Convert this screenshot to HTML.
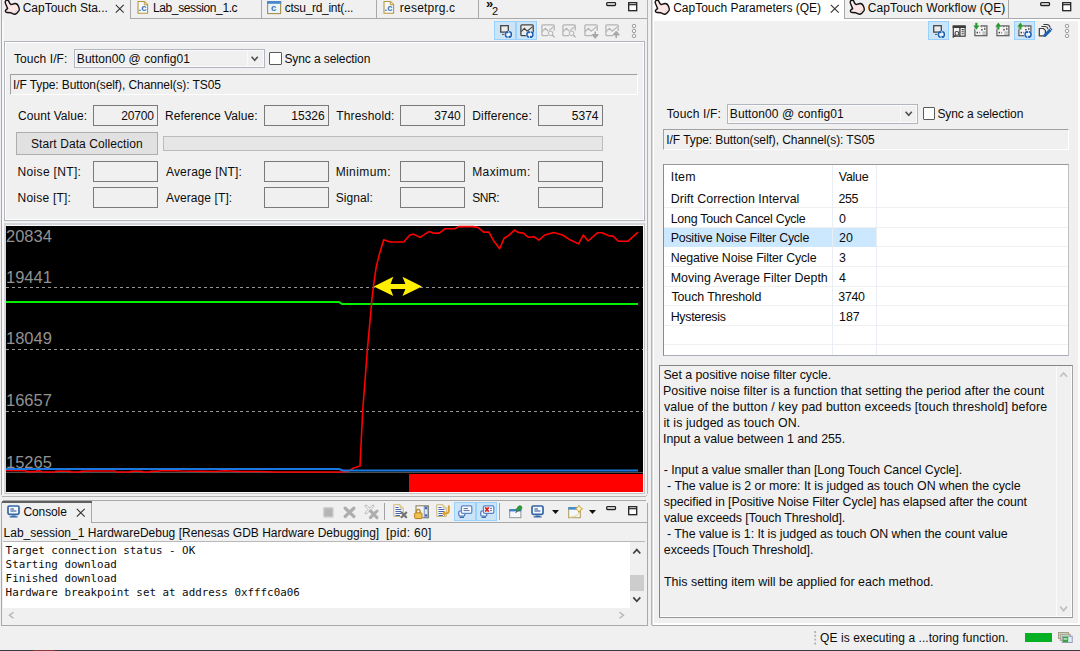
<!DOCTYPE html>
<html><head><meta charset="utf-8"><title>CapTouch</title>
<style>
html,body{margin:0;padding:0;}
body{width:1080px;height:651px;overflow:hidden;background:#f0f0f0;position:relative;font-family:"Liberation Sans",sans-serif;font-size:12px;color:#0c0c0c;}
.a{position:absolute;}
.t{position:absolute;white-space:pre;line-height:14px;height:14px;}
.box{position:absolute;box-sizing:border-box;border:1px solid #7a7a7a;background:#f0f0f0;}
.val{position:absolute;box-sizing:border-box;border:1px solid #7a7a7a;background:#f0f0f0;text-align:right;padding-right:4px;line-height:19px;}
.ln{position:absolute;background:#a0a0a0;}
svg{position:absolute;overflow:visible;}
.tb{position:absolute;left:671px;white-space:pre;font-size:12.4px;line-height:14px;}
.tv{position:absolute;left:839px;white-space:pre;font-size:12.4px;line-height:14px;}
.dl{font-size:12.4px;line-height:16px;height:16px;}
#tab1{left:22.73px!important;letter-spacing:-0.020px}
#tab2{left:153.02px!important;letter-spacing:-0.390px}
#tab3{left:284.85px!important;letter-spacing:-0.301px}
#tab4{left:399.82px!important;letter-spacing:0.215px}
#t1{left:14.04px!important;letter-spacing:0.060px}
#t2{left:76.85px!important;letter-spacing:0.039px}
#t3{left:284.45px!important;letter-spacing:-0.097px}
#t4{left:12.95px!important;letter-spacing:-0.095px}
#t5{left:18.10px!important;letter-spacing:0.043px}
#v1{left:121.23px!important;letter-spacing:-0.177px}
#t6{left:165.00px!important;letter-spacing:0.043px}
#v2{left:291.36px!important;letter-spacing:-0.010px}
#t7{left:336.13px!important;letter-spacing:0.176px}
#v3{left:434.13px!important;letter-spacing:-0.032px}
#t8{left:472.21px!important;letter-spacing:0.179px}
#v4{left:571.81px!important;letter-spacing:-0.001px}
#t9{left:31.03px!important;letter-spacing:0.079px}
#t10{left:17.53px!important;letter-spacing:0.343px}
#t11{left:166.00px!important;letter-spacing:0.167px}
#t12{left:335.64px!important;letter-spacing:0.412px}
#t13{left:472.21px!important;letter-spacing:0.389px}
#t14{left:17.53px!important;letter-spacing:0.225px}
#t15{left:166.00px!important;letter-spacing:0.094px}
#t16{left:335.67px!important;letter-spacing:0.073px}
#t17{left:472.18px!important;letter-spacing:-0.397px}
#rtab1{left:673.22px!important;letter-spacing:-0.013px}
#rtab2{left:867.73px!important;letter-spacing:0.118px}
#t18{left:666.66px!important;letter-spacing:0.170px}
#t19{left:729.79px!important;letter-spacing:0.097px}
#t20{left:937.45px!important;letter-spacing:-0.097px}
#t21{left:666.35px!important;letter-spacing:-0.082px}
#t22{left:670.76px!important;letter-spacing:0.213px}
#t24{left:670.72px!important;letter-spacing:0.053px}
#t26{left:670.72px!important;letter-spacing:-0.240px}
#t28{left:670.64px!important;letter-spacing:-0.201px}
#t30{left:670.72px!important;letter-spacing:-0.136px}
#t32{left:670.72px!important;letter-spacing:0.036px}
#t34{left:671.50px!important;letter-spacing:-0.107px}
#t36{left:670.72px!important;letter-spacing:-0.302px}
#t23{left:838.86px!important;letter-spacing:-0.255px}
#t25{left:838.52px!important;letter-spacing:-0.430px}
#t35{left:838.34px!important;letter-spacing:-0.313px}
#d1{left:663.39px!important;letter-spacing:-0.050px}
#d2{left:663.00px!important;letter-spacing:0.043px}
#d3{left:664.00px!important;letter-spacing:0.092px}
#d4{left:663.49px!important;letter-spacing:0.071px}
#d5{left:663.00px!important;letter-spacing:-0.036px}
#d7{left:663.79px!important;letter-spacing:-0.095px}
#d8{left:667.12px!important;letter-spacing:-0.026px}
#d9{left:663.79px!important;letter-spacing:-0.085px}
#d10{left:664.00px!important;letter-spacing:-0.099px}
#d11{left:667.12px!important;letter-spacing:-0.059px}
#d12{left:663.85px!important;letter-spacing:-0.072px}
#d14{left:664.00px!important;letter-spacing:0.033px}
#ctab{left:23.47px!important;letter-spacing:-0.111px}
#chdr{left:3.53px!important;letter-spacing:0.013px}
#chdr2{left:386.10px!important;letter-spacing:0.307px}
#stat{left:820.12px!important;letter-spacing:0.058px}
</style></head><body>

<!-- ================= LEFT TOP PANEL ================= -->
<div class="ln" style="left:1px;top:0;width:1px;height:495px;background:#a9a9a9"></div>
<div class="ln" style="left:647px;top:0;width:1px;height:494px;background:#b4b4b4"></div>
<div class="ln" style="left:2px;top:18px;width:645px;height:1px;background:#a9a9a9"></div>
<div class="ln" style="left:2px;top:496px;width:644px;height:1px;background:#b4b4b4"></div><div class="ln" style="left:646px;top:495px;width:1px;height:1px;background:#b4b4b4"></div>
<div class="a" id="lwhite" style="left:2px;top:19px;width:2px;height:476px;background:#f8f8f8"></div>
<!-- tab separators -->
<div class="ln" style="left:130px;top:0;width:1px;height:18px;background:#a9a9a9"></div>
<div class="ln" style="left:261px;top:0;width:1px;height:18px;background:#a9a9a9"></div>
<div class="ln" style="left:376px;top:0;width:1px;height:18px;background:#a9a9a9"></div>
<div class="ln" style="left:478px;top:0;width:1px;height:18px;background:#a9a9a9"></div>
<div class="a" style="left:2px;top:0;width:128px;height:19px;background:#f0f0f0"></div>

<span class="t" id="tab1" style="left:23px;top:1px;">CapTouch Sta...</span>
<span class="t" id="tab2" style="left:153px;top:1px;">Lab_session_1.c</span>
<span class="t" id="tab3" style="left:285px;top:1px;">ctsu_rd_int(...</span>
<span class="t" id="tab4" style="left:400px;top:1px;">resetprg.c</span>
<span class="t" id="tabmore" style="left:486px;top:-3px;font-size:13px;font-weight:bold">»</span>
<span class="t" id="tabmore2" style="left:492px;top:4px;font-size:11px;">2</span>

<!-- inner composite -->
<div class="a" id="comp" style="left:4px;top:41px;width:641px;height:180px;box-sizing:border-box;border:1px solid #b0b4bc;box-shadow:inset 1px 1px 0 #fff,inset -1px -1px 0 #fff;"></div>
<span class="t" id="t1" style="left:14px;top:52px;">Touch I/F:</span>
<div class="box" style="left:74px;top:49px;width:191px;height:19px;border-color:#b2b6be;background:#f0f0f0;box-shadow:inset 0 0 0 1px #fafafa"></div><div class="ln" style="left:247px;top:50px;width:1px;height:17px;background:#fafafa"></div>
<span class="t" id="t2" style="left:78px;top:52px;">Button00 @ config01</span>
<div class="box" style="left:269.3px;top:52.1px;width:12.6px;height:12.6px;background:#fff;border:1.2px solid #5a5a5a;border-radius:1px"></div>
<span class="t" id="t3" style="left:285px;top:52px;">Sync a selection</span>
<div class="box" style="left:10px;top:74px;width:628px;height:21px;border-color:#a0a0a0;border-bottom-color:#fff;border-right-color:#fff"></div>
<span class="t" id="t4" style="left:13px;top:78px;">I/F Type: Button(self), Channel(s): TS05</span>

<span class="t" id="t5" style="left:18px;top:109px;">Count Value:</span>
<div class="val" style="left:93px;top:105px;width:65px;height:21px;"></div>
<span class="t" id="v1" style="left:121.4px;top:109px;">20700</span>
<span class="t" id="t6" style="left:166px;top:109px;">Reference Value:</span>
<div class="val" style="left:264px;top:105px;width:65px;height:21px;"></div>
<span class="t" id="v2" style="left:292px;top:109px;">15326</span>
<span class="t" id="t7" style="left:336px;top:109px;">Threshold:</span>
<div class="val" style="left:400px;top:105px;width:65px;height:21px;"></div>
<span class="t" id="v3" style="left:434.7px;top:109px;">3740</span>
<span class="t" id="t8" style="left:473px;top:109px;">Difference:</span>
<div class="val" style="left:538px;top:105px;width:65px;height:21px;"></div>
<span class="t" id="v4" style="left:572.3px;top:109px;">5374</span>

<div class="box" style="left:16px;top:132px;width:142px;height:23px;background:#e1e1e1;border-color:#adadad"></div>
<span class="t" id="t9" style="left:31px;top:137px;">Start Data Collection</span>
<div class="box" style="left:163px;top:136px;width:440px;height:15px;background:#e6e6e6;border-color:#bcbcbc"></div>

<span class="t" id="t10" style="left:18px;top:165px;">Noise [NT]:</span>
<div class="val" style="left:93px;top:161px;width:65px;height:21px;"></div>
<span class="t" id="t11" style="left:166px;top:165px;">Average [NT]:</span>
<div class="val" style="left:264px;top:161px;width:65px;height:21px;"></div>
<span class="t" id="t12" style="left:336px;top:165px;">Minimum:</span>
<div class="val" style="left:400px;top:161px;width:65px;height:21px;"></div>
<span class="t" id="t13" style="left:473px;top:165px;">Maximum:</span>
<div class="val" style="left:538px;top:161px;width:65px;height:21px;"></div>

<span class="t" id="t14" style="left:18px;top:191px;">Noise [T]:</span>
<div class="val" style="left:93px;top:187px;width:65px;height:21px;"></div>
<span class="t" id="t15" style="left:166px;top:191px;">Average [T]:</span>
<div class="val" style="left:264px;top:187px;width:65px;height:21px;"></div>
<span class="t" id="t16" style="left:336px;top:191px;">Signal:</span>
<div class="val" style="left:400px;top:187px;width:65px;height:21px;"></div>
<span class="t" id="t17" style="left:473px;top:191px;">SNR:</span>
<div class="val" style="left:538px;top:187px;width:65px;height:21px;"></div>

<!-- CHART -->
<div class="a" id="chartwrap" style="left:4px;top:223px;width:641px;height:271px;box-sizing:border-box;border:2px solid #d2d5d9;border-right:1px solid #c4c4c4;border-bottom:1px solid #c4c4c4;background:#fafafa"></div>
<div class="a" id="chart" style="left:6px;top:226px;width:637px;height:266px;background:#000"></div>
<svg id="chartsvg" style="left:0;top:0" width="1080" height="651" viewBox="0 0 1080 651">
<g font-family="'Liberation Sans',sans-serif" font-size="16.5" fill="#929292">
<text x="6" y="242">20834</text>
<text x="6" y="283">19441</text>
<text x="6" y="344">18049</text>
<text x="6" y="406">16657</text>
<text x="6" y="468">15265</text>
</g>
<g stroke="#969696" stroke-width="1" stroke-dasharray="3 3" fill="none">
<path d="M6 287.5H643"/><path d="M6 349.5H643"/><path d="M6 411.5H643"/>
</g>
<path d="M6 472.5H643" stroke="#505050" stroke-width="1" fill="none"/>
<polyline fill="none" stroke="#00f000" stroke-width="2" points="6,302 339,302 342,304 638,304"/>
<polyline fill="none" stroke="#ff0000" stroke-width="1.6" stroke-linejoin="round" points="6,470.5 25,470.8 27,471.6 36,471.6 37,470.9 40,470.9 42,472 55,472 56,471.3 70,471.3 71,472 80,472 82,471.2 91,471 95,471 115,471 116,472 130,472 131,471.3 142,471.3 143,472 150,472 151,471.3 158,471.3 160,470.8 176,470.8 180,471 200,471.2 215,471.5 225,470.8 240,471.5 260,471.5 275,472 300,472 330,472 343,472 349.6,470.6 353.5,468 360,466 362.7,410.5 367.4,349.2 370.4,316.8 371.9,299 374.1,281.3 376.3,266.4 379.3,254.6 383.7,239.8 390.4,242 403.7,242 409.6,235.3 413.3,234.1 420,237.3 428.9,231.6 433.3,233.1 439.3,233.1 445.2,228.7 454.8,228.7 458.5,226.6 473.3,226.6 477.8,227.4 483.7,232.1 488.9,232.1 494,241.3 499.6,248.7 504.1,238.3 508.5,235.6 514.4,230.1 518.1,232.4 523.3,233.1 528.5,237.3 534.4,236.8 538.9,240.1 544.8,235 553.7,232.4 562.6,235 570,239.8 578.6,243.9 583.3,235 588.1,241 597.4,232.8 601.9,232.8 608.5,235.6 613,236.1 618.6,241.3 627.8,241.3 638.1,232.1"/>
<polyline fill="none" stroke="#1a78e0" stroke-width="2" points="6,469 339,469 343,470.5 638,470.5"/>
<rect x="409" y="474" width="234" height="18" fill="#ff0000"/>
<path d="M373.8 286.4 L393.3 276.8 L390.6 284 L405.4 284 L402.5 276.8 L422 286.4 L402.5 296 L405.4 289 L390.6 289 L393.3 296 Z" fill="#ffee00"/>
</svg>

<!-- ================= CONSOLE ================= -->

<div class="ln" style="left:1px;top:502px;width:1px;height:123px;background:#a9a9a9"></div>
<div class="ln" style="left:647px;top:503px;width:1px;height:122px;background:#a9a9a9"></div>
<div class="ln" style="left:3px;top:500px;width:643px;height:1px;background:#a9a9a9"></div>
<div class="ln" style="left:2px;top:501px;width:90px;height:2px;background:#5f5f5f"></div>
<div class="ln" style="left:91px;top:503px;width:1px;height:20px;background:#a9a9a9"></div>
<div class="ln" style="left:92px;top:522px;width:555px;height:1px;background:#a9a9a9"></div>
<span class="t" id="ctab" style="left:24px;top:505px;">Console</span>
<span class="t" id="chdr" style="left:4px;top:526px;">Lab_session_1 HardwareDebug [Renesas GDB Hardware Debugging]</span>
<span class="t" id="chdr2" style="left:387px;top:526px;">[pid: 60]</span>
<div class="ln" style="left:3px;top:541px;width:642px;height:1px;background:#b8b8b8"></div>
<div class="a" style="left:3px;top:542px;width:627px;height:66px;background:#fff"></div>
<div class="a" id="ctext" style="left:5.6px;top:544px;white-space:pre;font-family:'DejaVu Sans Mono','Liberation Mono',monospace;font-size:10.87px;line-height:14.1px;">Target connection status - OK
Starting download
Finished download
Hardware breakpoint set at address 0xfffc0a06</div>
<div class="ln" style="left:1px;top:625px;width:647px;height:1px;background:#a9a9a9"></div>



<div class="a" style="left:630px;top:575px;width:14px;height:16px;background:#cdcdcd"></div>
<svg style="left:630px;top:542px" width="15" height="80" viewBox="0 0 15 80"><path d="M3.3 11.5L6.8 7.6L10.3 11.5" fill="none" stroke="#404040" stroke-width="1.7"/><path d="M3.3 55.4L6.8 59.3L10.3 55.4" fill="none" stroke="#404040" stroke-width="1.7"/></svg>
<svg style="left:0;top:608px" width="648" height="14" viewBox="0 0 648 14"><path d="M13.5 4.3L9.5 7.3L13.5 10.3" fill="none" stroke="#b4b4b4" stroke-width="1.4"/><path d="M619.5 4.3L623.5 7.3L619.5 10.3" fill="none" stroke="#b4b4b4" stroke-width="1.4"/></svg>
<!-- ================= RIGHT PANEL ================= -->

<div class="ln" style="left:651px;top:0;width:1px;height:625px;background:#b4b4b4"></div><div class="ln" style="left:652px;top:0;width:1px;height:625px;background:#dcdcdc"></div>
<div class="ln" style="left:652px;top:625px;width:428px;height:1px;background:#a9a9a9"></div>
<div class="a" style="left:653px;top:0;width:192px;height:21px;background:#fff"></div>
<div class="ln" style="left:844px;top:0;width:1px;height:19px;background:#a9a9a9"></div>
<div class="ln" style="left:845px;top:18px;width:235px;height:1px;background:#a9a9a9"></div>
<div class="ln" style="left:1008px;top:0;width:1px;height:18px;background:#a9a9a9"></div>
<div class="a" style="left:845px;top:19px;width:235px;height:2px;background:#fff"></div>
<span class="t" id="rtab1" style="left:674px;top:1px;">CapTouch Parameters (QE)</span>
<span class="t" id="rtab2" style="left:868px;top:1px;">CapTouch Workflow (QE)</span>

<span class="t" id="t18" style="left:667px;top:107px;">Touch I/F:</span>
<div class="box" style="left:727px;top:104px;width:191px;height:19.5px;border-color:#b2b6be;box-shadow:inset 0 0 0 1px #fafafa"></div><div class="ln" style="left:900px;top:105px;width:1px;height:17px;background:#fafafa"></div>
<span class="t" id="t19" style="left:731px;top:107px;">Button00 @ config01</span>
<div class="box" style="left:922.8px;top:107.3px;width:12.4px;height:12.5px;background:#fff;border:1.2px solid #5a5a5a;border-radius:1px"></div>
<span class="t" id="t20" style="left:938px;top:107px;">Sync a selection</span>
<div class="box" style="left:663px;top:129px;width:406px;height:21px;border-color:#a0a0a0;border-bottom-color:#fff;border-right-color:#fff"></div>
<span class="t" id="t21" style="left:667px;top:133px;">I/F Type: Button(self), Channel(s): TS05</span>

<!-- table -->
<div class="box" id="tbl" style="left:663px;top:164px;width:406px;height:192px;background:#fff;border-color:#9a9a9a #c0c0c0 #a8acb8 #8c8c8c"></div>
<div class="ln" style="left:664px;top:207px;width:404px;height:1px;background:#f0f0f0"></div>
<div class="ln" style="left:664px;top:227px;width:404px;height:1px;background:#f0f0f0"></div>
<div class="ln" style="left:664px;top:246px;width:404px;height:1px;background:#f0f0f0"></div>
<div class="ln" style="left:664px;top:266px;width:404px;height:1px;background:#f0f0f0"></div>
<div class="ln" style="left:664px;top:286px;width:404px;height:1px;background:#f0f0f0"></div>
<div class="ln" style="left:664px;top:305px;width:404px;height:1px;background:#f0f0f0"></div>
<div class="ln" style="left:664px;top:325px;width:404px;height:1px;background:#f0f0f0"></div>
<div class="ln" style="left:664px;top:344px;width:404px;height:1px;background:#f0f0f0"></div>
<div class="a" style="left:664px;top:228px;width:212px;height:19px;background:#cce8ff"></div>
<div class="ln" style="left:832px;top:165px;width:1px;height:190px;background:#e8eef4"></div>
<div class="ln" style="left:876px;top:165px;width:1px;height:190px;background:#e8eef4"></div>
<div class="tb" id="t22" style="top:170px">Item</div><div class="tv" id="t23" style="top:170px">Value</div>
<div class="tb" id="t24" style="top:192px">Drift Correction Interval</div><div class="tv" id="t25" style="top:192px">255</div>
<div class="tb" id="t26" style="top:212px">Long Touch Cancel Cycle</div><div class="tv" id="t27" style="top:212px">0</div>
<div class="tb" id="t28" style="top:231px">Positive Noise Filter Cycle</div><div class="tv" id="t29" style="top:231px">20</div>
<div class="tb" id="t30" style="top:251px">Negative Noise Filter Cycle</div><div class="tv" id="t31" style="top:251px">3</div>
<div class="tb" id="t32" style="top:271px">Moving Average Filter Depth</div><div class="tv" id="t33" style="top:271px">4</div>
<div class="tb" id="t34" style="top:290px">Touch Threshold</div><div class="tv" id="t35" style="top:290px">3740</div>
<div class="tb" id="t36" style="top:310px">Hysteresis</div><div class="tv" id="t37" style="top:310px">187</div>

<!-- description -->
<div class="box" id="desc" style="left:659px;top:364.5px;width:414.3px;height:253.3px;border-color:#868686 #a4a4a4 #979797 #868686;box-shadow:inset -1px -1px 0 #fcfcfc"></div>
<div class="ln" style="left:1056px;top:366px;width:1px;height:250px;background:#fafafa"></div>
<span class="t dl" id="d1" style="left:664px;top:367.00px;">Set a positive noise filter cycle.</span>
<span class="t dl" id="d2" style="left:664px;top:382.89px;">Positive noise filter is a function that setting the period after the count</span>
<span class="t dl" id="d3" style="left:664px;top:398.78px;">value of the button / key pad button exceeds [touch threshold] before</span>
<span class="t dl" id="d4" style="left:664px;top:414.67px;">it is judged as touch ON.</span>
<span class="t dl" id="d5" style="left:664px;top:430.56px;">Input a value between 1 and 255.</span>
<span class="t dl" id="d7" style="left:664px;top:462.34px;">- Input a value smaller than [Long Touch Cancel Cycle].</span>
<span class="t dl" id="d8" style="left:667.7px;top:478.23px;">- The value is 2 or more: It is judged as touch ON when the cycle</span>
<span class="t dl" id="d9" style="left:664px;top:494.12px;">specified in [Positive Noise Filter Cycle] has elapsed after the count</span>
<span class="t dl" id="d10" style="left:664px;top:510.01px;">value exceeds [Touch Threshold].</span>
<span class="t dl" id="d11" style="left:667.7px;top:525.90px;">- The value is 1: It is judged as touch ON when the count value</span>
<span class="t dl" id="d12" style="left:664px;top:541.79px;">exceeds [Touch Threshold].</span>
<span class="t dl" id="d14" style="left:664px;top:573.57px;">This setting item will be applied for each method.</span>



<!-- desc scrollbar -->
<svg style="left:1056px;top:366px" width="17" height="251" viewBox="0 0 17 251"><path d="M4.2 10.8L7.6 7L11 10.8" fill="none" stroke="#c0c0c0" stroke-width="1.7"/><path d="M4.2 240.6L7.6 244.6L11 240.6" fill="none" stroke="#c0c0c0" stroke-width="1.7"/></svg>
<div class="ln" style="left:653px;top:20px;width:1px;height:604px;background:#fff"></div>
<div class="ln" style="left:653px;top:623px;width:427px;height:2px;background:#fff"></div>
<div class="ln" style="left:1078px;top:19px;width:2px;height:605px;background:#fff"></div>
<svg style="left:0px;top:0px" width="22" height="16" viewBox="0 0 22 16"><path d="M6.6 0.4 C5.2 0.6 5 2 5.5 3.5 L7.6 8.6 L5.9 9.9 C5 10.8 5.4 12.4 7 12.5 L11 12.8 L13.8 14.2 C15 14.6 16 14 17 13 L19 10.6 C19.6 9.5 19.2 8 18.6 6.5 C18 5 16.5 3.4 15 3.5 L11 4.6 L9.9 3.6 L8.6 0.9 C8.1 0.1 7.2 0.1 6.6 0.4 Z" fill="#fde6e6" stroke="#111" stroke-width="1.4" stroke-linejoin="round"/><path d="M14.5 12.6L17.2 9.6" stroke="#d8c0c0" stroke-width="0.8" fill="none"/></svg>
<svg style="left:650px;top:0px" width="22" height="16" viewBox="0 0 22 16"><path d="M6.6 0.4 C5.2 0.6 5 2 5.5 3.5 L7.6 8.6 L5.9 9.9 C5 10.8 5.4 12.4 7 12.5 L11 12.8 L13.8 14.2 C15 14.6 16 14 17 13 L19 10.6 C19.6 9.5 19.2 8 18.6 6.5 C18 5 16.5 3.4 15 3.5 L11 4.6 L9.9 3.6 L8.6 0.9 C8.1 0.1 7.2 0.1 6.6 0.4 Z" fill="#fde6e6" stroke="#111" stroke-width="1.4" stroke-linejoin="round"/><path d="M14.5 12.6L17.2 9.6" stroke="#d8c0c0" stroke-width="0.8" fill="none"/></svg>
<svg style="left:845px;top:0px" width="22" height="16" viewBox="0 0 22 16"><path d="M6.6 0.4 C5.2 0.6 5 2 5.5 3.5 L7.6 8.6 L5.9 9.9 C5 10.8 5.4 12.4 7 12.5 L11 12.8 L13.8 14.2 C15 14.6 16 14 17 13 L19 10.6 C19.6 9.5 19.2 8 18.6 6.5 C18 5 16.5 3.4 15 3.5 L11 4.6 L9.9 3.6 L8.6 0.9 C8.1 0.1 7.2 0.1 6.6 0.4 Z" fill="#fde6e6" stroke="#111" stroke-width="1.4" stroke-linejoin="round"/><path d="M14.5 12.6L17.2 9.6" stroke="#d8c0c0" stroke-width="0.8" fill="none"/></svg>
<svg style="left:137px;top:0px" width="12" height="15" viewBox="0 0 12 15"><path d="M1 1.5H7.5L10.6 4.6V13.3H1Z" fill="#f4f8ff" stroke="#b8963c" stroke-width="1.1"/><path d="M7.3 1.5V4.8H10.6" fill="#f3dfa0" stroke="#b8963c" stroke-width="0.9"/><text x="1.6" y="11" font-family="'Liberation Sans',sans-serif" font-size="9.5" font-weight="bold" fill="#3a74b4">.c</text></svg>
<svg style="left:383.4px;top:0px" width="12" height="15" viewBox="0 0 12 15"><path d="M1 1.5H7.5L10.6 4.6V13.3H1Z" fill="#f4f8ff" stroke="#b8963c" stroke-width="1.1"/><path d="M7.3 1.5V4.8H10.6" fill="#f3dfa0" stroke="#b8963c" stroke-width="0.9"/><text x="1.6" y="11" font-family="'Liberation Sans',sans-serif" font-size="9.5" font-weight="bold" fill="#3a74b4">.c</text></svg>
<svg style="left:266.6px;top:0px" width="15" height="15" viewBox="0 0 15 15"><rect x="0.6" y="1.6" width="13" height="12" fill="#e8f4fc" stroke="#a8904a" stroke-width="1.1"/><rect x="0" y="1" width="14.2" height="2.8" fill="#4a88c8"/><text x="4" y="11.4" font-family="'Liberation Sans',sans-serif" font-size="9.5" font-weight="bold" fill="#3a74b4">c</text></svg>
<svg style="left:114.5px;top:4px" width="10" height="10" viewBox="0 0 10 10"><path d="M0.8 0.8L8.7 8.7M8.7 0.8L0.8 8.7" stroke="#333" stroke-width="1.1" fill="none"/></svg>
<svg style="left:829.5px;top:4px" width="10" height="10" viewBox="0 0 10 10"><path d="M0.8 0.8L8.7 8.7M8.7 0.8L0.8 8.7" stroke="#333" stroke-width="1.1" fill="none"/></svg>
<svg style="left:75.5px;top:507.5px" width="10" height="10" viewBox="0 0 10 10"><path d="M0.8 0.8L8.7 8.7M8.7 0.8L0.8 8.7" stroke="#333" stroke-width="1.1" fill="none"/></svg>
<svg style="left:606px;top:2px" width="11" height="5" viewBox="0 0 11 5"><rect x="0.7" y="0.7" width="8.8" height="2.8" rx="0.8" fill="#fff" stroke="#222" stroke-width="1.3"/></svg>
<svg style="left:628px;top:2px" width="10" height="10" viewBox="0 0 10 10"><rect x="0.7" y="0.7" width="8" height="8" fill="#fff" stroke="#222" stroke-width="1.3"/><path d="M0.7 2.7H8.7" stroke="#222" stroke-width="1.2"/></svg>
<svg style="left:1040px;top:2px" width="11" height="5" viewBox="0 0 11 5"><rect x="0.7" y="0.7" width="8.8" height="2.8" rx="0.8" fill="#fff" stroke="#222" stroke-width="1.3"/></svg>
<svg style="left:1061.5px;top:2px" width="10" height="10" viewBox="0 0 10 10"><rect x="0.7" y="0.7" width="8" height="8" fill="#fff" stroke="#222" stroke-width="1.3"/><path d="M0.7 2.7H8.7" stroke="#222" stroke-width="1.2"/></svg>
<svg style="left:606px;top:506px" width="11" height="5" viewBox="0 0 11 5"><rect x="0.7" y="0.7" width="8.8" height="2.8" rx="0.8" fill="#fff" stroke="#222" stroke-width="1.3"/></svg>
<svg style="left:628px;top:506px" width="10" height="10" viewBox="0 0 10 10"><rect x="0.7" y="0.7" width="8" height="8" fill="#fff" stroke="#222" stroke-width="1.3"/><path d="M0.7 2.7H8.7" stroke="#222" stroke-width="1.2"/></svg>
<div class="a" style="left:494px;top:20.5px;width:22px;height:19.5px;box-sizing:border-box;background:#cce4f7;border:1px solid #99d1ff"></div>
<div class="a" style="left:515.5px;top:20.5px;width:21.5px;height:19.5px;box-sizing:border-box;background:#cce4f7;border:1px solid #99d1ff"></div>
<div class="a" style="left:927.5px;top:20.5px;width:21.5px;height:19px;box-sizing:border-box;background:#cce4f7;border:1px solid #99d1ff"></div>
<div class="a" style="left:1013.5px;top:20.5px;width:21.5px;height:19px;box-sizing:border-box;background:#cce4f7;border:1px solid #99d1ff"></div>
<div class="a" style="left:454px;top:501.5px;width:22px;height:19.5px;box-sizing:border-box;background:#cce4f7;border:1px solid #99d1ff"></div>
<div class="a" style="left:475.5px;top:501.5px;width:21.5px;height:19.5px;box-sizing:border-box;background:#cce4f7;border:1px solid #99d1ff"></div>
<svg style="left:497px;top:22px" width="17" height="18" viewBox="0 0 17 18"><rect x="3.7" y="3.7" width="7.6" height="6.4" fill="#ececec" stroke="#454545" stroke-width="1.3"/><path d="M5 12.4H8" stroke="#555" stroke-width="1"/><ellipse cx="11.4" cy="12.55" rx="4.2" ry="3.6" fill="#f2f6fb" opacity="0.9"/><path d="M10.700000000000001 9.850000000000001A2.3 2.7 0 0 0 10.700000000000001 15.25" fill="none" stroke="#1a5fb4" stroke-width="1.5"/><path d="M12.1 15.25A2.3 2.7 0 0 0 12.1 9.850000000000001" fill="none" stroke="#1a5fb4" stroke-width="1.5"/><rect x="9.5" y="9.25" width="1.9" height="1.9" fill="#1a5fb4"/><rect x="11.4" y="13.950000000000001" width="1.9" height="1.9" fill="#1a5fb4"/></svg>
<svg style="left:930.3px;top:22px" width="17" height="18" viewBox="0 0 17 18"><rect x="3.7" y="3.7" width="7.6" height="6.4" fill="#ececec" stroke="#454545" stroke-width="1.3"/><path d="M5 12.4H8" stroke="#555" stroke-width="1"/><ellipse cx="11.4" cy="12.55" rx="4.2" ry="3.6" fill="#f2f6fb" opacity="0.9"/><path d="M10.700000000000001 9.850000000000001A2.3 2.7 0 0 0 10.700000000000001 15.25" fill="none" stroke="#1a5fb4" stroke-width="1.5"/><path d="M12.1 15.25A2.3 2.7 0 0 0 12.1 9.850000000000001" fill="none" stroke="#1a5fb4" stroke-width="1.5"/><rect x="9.5" y="9.25" width="1.9" height="1.9" fill="#1a5fb4"/><rect x="11.4" y="13.950000000000001" width="1.9" height="1.9" fill="#1a5fb4"/></svg>
<svg style="left:520px;top:24px" width="18" height="16" viewBox="0 0 18 16"><rect x="0.9" y="0.8" width="12.3" height="10.9" rx="1" fill="#ececec" stroke="#454545" stroke-width="1.3"/><path d="M1.2 7.6L4.4 4.4L7.2 7.2L12.6 2.6" fill="none" stroke="#454545" stroke-width="1.1"/><ellipse cx="9.9" cy="10.6" rx="4.2" ry="3.6" fill="#f2f6fb" opacity="0.9"/><path d="M9.200000000000001 7.8999999999999995A2.3 2.7 0 0 0 9.200000000000001 13.3" fill="none" stroke="#1a5fb4" stroke-width="1.5"/><path d="M10.6 13.3A2.3 2.7 0 0 0 10.6 7.8999999999999995" fill="none" stroke="#1a5fb4" stroke-width="1.5"/><rect x="8.0" y="7.3" width="1.9" height="1.9" fill="#1a5fb4"/><rect x="9.9" y="12.0" width="1.9" height="1.9" fill="#1a5fb4"/></svg>
<svg style="left:541px;top:24.4px" width="18" height="16" viewBox="0 0 18 16"><rect x="0.9" y="0.8" width="12.3" height="10.9" rx="1" fill="none" stroke="#b4b4b4" stroke-width="1.3"/><path d="M1.2 7.6L4.4 4.4L7.2 7.2L12.6 2.6" fill="none" stroke="#b4b4b4" stroke-width="1.1"/><rect x="7" y="6.5" width="7" height="7" fill="#f0f0f0" stroke="none"/><circle cx="9.6" cy="9.3" r="2.3" fill="#f0f0f0" stroke="#b0b0b0" stroke-width="1"/><path d="M11.3 11L13.6 13.4" stroke="#b0b0b0" stroke-width="1.3"/></svg>
<svg style="left:562.3px;top:24.4px" width="18" height="16" viewBox="0 0 18 16"><rect x="0.9" y="0.8" width="12.3" height="10.9" rx="1" fill="none" stroke="#b4b4b4" stroke-width="1.3"/><path d="M1.2 7.6L4.4 4.4L7.2 7.2L12.6 2.6" fill="none" stroke="#b4b4b4" stroke-width="1.1"/><rect x="7" y="6.5" width="7" height="7" fill="#f0f0f0" stroke="none"/><circle cx="9.6" cy="9.3" r="2.3" fill="#f0f0f0" stroke="#b0b0b0" stroke-width="1"/><path d="M11.3 11L13.6 13.4" stroke="#b0b0b0" stroke-width="1.3"/></svg>
<svg style="left:584px;top:24.4px" width="18" height="16" viewBox="0 0 18 16"><rect x="0.9" y="0.8" width="12.3" height="10.9" rx="1" fill="none" stroke="#b4b4b4" stroke-width="1.3"/><path d="M1.2 7.6L4.4 4.4L7.2 7.2L12.6 2.6" fill="none" stroke="#b4b4b4" stroke-width="1.1"/><rect x="8" y="7" width="7" height="8" fill="#f0f0f0"/><path d="M11.2 7.5V12M8.6 10.8L11.2 13.8L13.8 10.8Z" stroke="#a8a8a8" stroke-width="1.6" fill="#a8a8a8" stroke-linejoin="round"/></svg>
<svg style="left:605.2px;top:24.4px" width="18" height="16" viewBox="0 0 18 16"><rect x="0.9" y="0.8" width="12.3" height="10.9" rx="1" fill="none" stroke="#b4b4b4" stroke-width="1.3"/><path d="M1.2 7.6L4.4 4.4L7.2 7.2L12.6 2.6" fill="none" stroke="#b4b4b4" stroke-width="1.1"/><rect x="8" y="7" width="7" height="8" fill="#f0f0f0"/><path d="M11.2 14V9.5M8.6 10.8L11.2 7.8L13.8 10.8Z" stroke="#a8a8a8" stroke-width="1.6" fill="#a8a8a8" stroke-linejoin="round"/></svg>
<svg style="left:629.8px;top:22.3px" width="8" height="20" viewBox="0 0 8 20"><circle cx="4" cy="4.0" r="1.75" fill="#f8f8f8" stroke="#969696" stroke-width="0.95"/><circle cx="4" cy="8.95" r="1.75" fill="#f8f8f8" stroke="#969696" stroke-width="0.95"/><circle cx="4" cy="13.9" r="1.75" fill="#f8f8f8" stroke="#969696" stroke-width="0.95"/></svg>
<svg style="left:1063.15px;top:21.9px" width="8" height="20" viewBox="0 0 8 20"><circle cx="4" cy="4.0" r="1.75" fill="#f8f8f8" stroke="#969696" stroke-width="0.95"/><circle cx="4" cy="8.95" r="1.75" fill="#f8f8f8" stroke="#969696" stroke-width="0.95"/><circle cx="4" cy="13.9" r="1.75" fill="#f8f8f8" stroke="#969696" stroke-width="0.95"/></svg>
<svg style="left:952.3px;top:24.7px" width="16" height="14" viewBox="0 0 16 14"><rect x="1.3" y="1.1" width="11.8" height="10.1" fill="#f4f4f4" stroke="#3c3c3c" stroke-width="1.2"/><rect x="0.7" y="0.5" width="13" height="2.5" fill="#3a3a3a"/><path d="M7.9 3V11.4" stroke="#3c3c3c" stroke-width="1.3"/><path d="M9.6 4.6H11.8M9.6 6.8H11.8M9.6 8.8H11.8" stroke="#444" stroke-width="1.1"/><circle cx="4.9" cy="8.4" r="1.9" fill="#f4f4f4" stroke="#444" stroke-width="1.1"/><path d="M3.5 9.9L0.7 12.4" stroke="#444" stroke-width="1.4"/></svg>
<svg style="left:972.6px;top:23.2px" width="18" height="16" viewBox="0 0 18 16"><rect x="1.9" y="2.9" width="12" height="9.8" fill="#f4f4f4" stroke="#5a5a5a" stroke-width="1.2"/><path d="M7.8 3.5L8.7 4.5L9.6 3.5ZM10.8 3.5L11.7 4.5L12.6 3.5Z" fill="#555"/><rect x="8.2" y="6" width="1.5" height="1.5" fill="#444"/><rect x="11.1" y="5.2" width="1.4" height="1.6" fill="#444"/><rect x="3.6" y="8.8" width="1.4" height="1.6" fill="#444"/><rect x="6.4" y="8.8" width="0.7" height="1.6" fill="#555"/><path d="M9.4 9.1H12.9M9.4 11.1H12.9" stroke="#8a8a8a" stroke-width="0.9"/><path d="M3.35 -0.2V3.6M0.4 2.8H6.3L3.35 6.6Z" stroke="#f4f4f4" stroke-width="1.6" fill="none"/><path d="M3.35 -0.2V3.6" stroke="#2a9a32" stroke-width="2.2"/><path d="M0.2 2.6H6.5L3.35 6.8Z" fill="#2a9a32"/></svg>
<svg style="left:994.5px;top:23.2px" width="18" height="16" viewBox="0 0 18 16"><rect x="1.9" y="2.9" width="12" height="9.8" fill="#f4f4f4" stroke="#5a5a5a" stroke-width="1.2"/><path d="M7.8 3.5L8.7 4.5L9.6 3.5ZM10.8 3.5L11.7 4.5L12.6 3.5Z" fill="#555"/><rect x="8.2" y="6" width="1.5" height="1.5" fill="#444"/><rect x="11.1" y="5.2" width="1.4" height="1.6" fill="#444"/><rect x="3.6" y="8.8" width="1.4" height="1.6" fill="#444"/><rect x="6.4" y="8.8" width="0.7" height="1.6" fill="#555"/><path d="M9.4 9.1H12.9M9.4 11.1H12.9" stroke="#8a8a8a" stroke-width="0.9"/><path d="M3.35 3V6.6" stroke="#f4f4f4" stroke-width="3.6"/><path d="M0 4H6.7L3.35 -0.4Z" fill="#f4f4f4"/><path d="M3.35 3V6.6" stroke="#2a9a32" stroke-width="2.2"/><path d="M0.2 3.8H6.5L3.35 -0.4Z" fill="#2a9a32"/></svg>
<svg style="left:1016.8px;top:23.2px" width="18" height="16" viewBox="0 0 18 16"><rect x="1.9" y="2.9" width="12" height="9.8" fill="#f4f4f4" stroke="#5a5a5a" stroke-width="1.2"/><path d="M7.8 3.5L8.7 4.5L9.6 3.5ZM10.8 3.5L11.7 4.5L12.6 3.5Z" fill="#555"/><rect x="8.2" y="6" width="1.5" height="1.5" fill="#444"/><rect x="11.1" y="5.2" width="1.4" height="1.6" fill="#444"/><rect x="3.6" y="8.8" width="1.4" height="1.6" fill="#444"/><rect x="6.4" y="8.8" width="0.7" height="1.6" fill="#555"/><path d="M9.4 9.1H12.9M9.4 11.1H12.9" stroke="#8a8a8a" stroke-width="0.9"/><path d="M3.35 3V6.6" stroke="#f4f4f4" stroke-width="3.6"/><path d="M0 4H6.7L3.35 -0.4Z" fill="#f4f4f4"/><path d="M3.35 3V6.6" stroke="#2a9a32" stroke-width="2.2"/><path d="M0.2 3.8H6.5L3.35 -0.4Z" fill="#2a9a32"/><ellipse cx="11.1" cy="11.45" rx="4.2" ry="3.6" fill="#f2f6fb" opacity="0.9"/><path d="M10.4 8.75A2.3 2.7 0 0 0 10.4 14.149999999999999" fill="none" stroke="#1a5fb4" stroke-width="1.5"/><path d="M11.799999999999999 14.149999999999999A2.3 2.7 0 0 0 11.799999999999999 8.75" fill="none" stroke="#1a5fb4" stroke-width="1.5"/><rect x="9.2" y="8.149999999999999" width="1.9" height="1.9" fill="#1a5fb4"/><rect x="11.1" y="12.85" width="1.9" height="1.9" fill="#1a5fb4"/></svg>
<svg style="left:1038.3px;top:23.4px" width="16" height="15" viewBox="0 0 16 15"><path d="M1.3 5.5H5.4L7.4 7.4V12.8H1.3Z" fill="#f4f4f4" stroke="#3c3c3c" stroke-width="1.2" stroke-linejoin="round"/><path d="M3.4 3.5H7.2C8.6 3.6 9.6 4.6 10 6" fill="none" stroke="#3c3c3c" stroke-width="1.1"/><path d="M5.4 1.5H9C10.6 1.7 11.8 3 12.2 4.6" fill="none" stroke="#3c3c3c" stroke-width="1.1"/><path d="M6.6 12.6L12.6 6.6" stroke="#1f5fb0" stroke-width="3"/><path d="M5.4 14L6.2 11.6L7.8 13.2Z" fill="#1f5fb0"/><path d="M12.2 7L13.6 5.6" stroke="#1f5fb0" stroke-width="2.6"/><path d="M11.4 5.4L13.8 7.8" stroke="#f0f0f0" stroke-width="0.7"/></svg>
<svg style="left:6.5px;top:504.8px" width="14" height="13" viewBox="0 0 14 13"><rect x="1" y="1" width="11" height="8.4" rx="1.3" fill="#f4f8ff" stroke="#3465a4" stroke-width="1.7"/><path d="M3.4 4H7M3.4 6H9.4" stroke="#27488a" stroke-width="1"/><path d="M4.6 10.4H8.6V11.3H10.6V12.4H2.6V11.3H4.6Z" fill="#3465a4"/></svg>
<svg style="left:531.2px;top:504.6px" width="14" height="13" viewBox="0 0 14 13"><rect x="1" y="1" width="11" height="8.4" rx="1.3" fill="#f4f8ff" stroke="#3465a4" stroke-width="1.7"/><path d="M3.4 4H7M3.4 6H9.4" stroke="#27488a" stroke-width="1"/><path d="M4.6 10.4H8.6V11.3H10.6V12.4H2.6V11.3H4.6Z" fill="#3465a4"/></svg>
<svg style="left:322.5px;top:506.5px" width="11" height="11" viewBox="0 0 11 11"><rect x="0.8" y="0.8" width="9.2" height="9.2" rx="0.8" fill="#b4b4b4" stroke="#cdcdcd" stroke-width="1.4"/></svg>
<svg style="left:343px;top:505.5px" width="14" height="13" viewBox="0 0 14 13"><path d="M2.2 2.2L10.8 10.4M10.8 2.2L2.2 10.4" stroke="#aeaeae" stroke-width="3.3" stroke-linecap="round"/></svg>
<svg style="left:363.5px;top:503.5px" width="16" height="16" viewBox="0 0 16 16"><path d="M2 2L9 9M9 2L2 9" stroke="#c0c0c0" stroke-width="2.8" stroke-linecap="round"/><path d="M2.3 2.3L8.7 8.7M8.7 2.3L2.3 8.7" stroke="#f6f6f6" stroke-width="1.2" stroke-linecap="round"/><path d="M6.4 7L13 13.6M13 7L6.4 13.6" stroke="#aeaeae" stroke-width="3" stroke-linecap="round"/></svg>
<div class="ln" style="left:384px;top:503px;width:1px;height:17px;background:#a0a0a0"></div>
<div class="ln" style="left:499px;top:503px;width:1px;height:17px;background:#a0a0a0"></div>
<svg style="left:393px;top:504px" width="15" height="15" viewBox="0 0 15 15"><path d="M0.8 0.8H7L10.2 4V12.4H0.8Z" fill="#fcfdff" stroke="#c8b070" stroke-width="1"/><path d="M7 0.8V4H10.2" fill="#f0e0a8" stroke="#c8b070" stroke-width="0.8"/><path d="M2.4 3.5H5.6M2.4 5.5H8.4M2.4 7.5H8.4M2.4 9.5H8.4M2.4 11.5H7" stroke="#4468b4" stroke-width="1"/><path d="M8.6 8.6L13.2 13.2M13.2 8.6L8.6 13.2" stroke="#777" stroke-width="2.2" stroke-linecap="round"/></svg>
<svg style="left:414px;top:505px" width="16" height="15" viewBox="0 0 16 15"><rect x="2" y="0.8" width="12.4" height="12" fill="#f0f6fd" stroke="#8a7a50" stroke-width="1"/><rect x="10.2" y="1.3" width="3.8" height="11" fill="#dce6f4" stroke="#5a78b0" stroke-width="0.8"/><rect x="11" y="2.2" width="2.2" height="2" fill="#3a5a9c"/><rect x="11" y="9.4" width="2.2" height="2" fill="#3a5a9c"/><path d="M2.4 8V6.4A1.9 1.9 0 0 1 6.2 6.4V8" fill="none" stroke="#b88a28" stroke-width="1.3"/><rect x="0.6" y="7.8" width="7.4" height="5.8" rx="1" fill="#eec050" stroke="#b88220" stroke-width="1"/></svg>
<svg style="left:436px;top:504px" width="16" height="15" viewBox="0 0 16 15"><path d="M0.8 0.8H7L10.2 4V12.4H0.8Z" fill="#fcfdff" stroke="#c8b070" stroke-width="1"/><path d="M7 0.8V4H10.2" fill="#f0e0a8" stroke="#c8b070" stroke-width="0.8"/><path d="M2.4 3.5H5.6M2.4 5.5H8.4M2.4 7.5H8.4M2.4 9.5H8.4M2.4 11.5H7" stroke="#4468b4" stroke-width="1"/><path d="M12.8 2.2V7C12.8 9.4 11 9.6 8.6 9.6" fill="none" stroke="#d8a030" stroke-width="2" stroke-linecap="round"/><path d="M9.2 6.8L5.8 9.6L9.2 12.4Z" fill="#d8a030"/></svg>
<svg style="left:458.2px;top:504.6px" width="15" height="14" viewBox="0 0 15 14"><rect x="0.8" y="6" width="6" height="5" rx="1" fill="#f4f8ff" stroke="#4a74b8" stroke-width="1.2"/><path d="M2 11.6H6V13H1.4Z" fill="#3f6cb0"/><rect x="3.4" y="0.9" width="10.4" height="7.4" rx="1.2" fill="#f8fbff" stroke="#5a86cc" stroke-width="1.3"/><path d="M5.6 3.6H10M5.6 5.6H11.6" stroke="#4a5a8a" stroke-width="0.9"/></svg>
<svg style="left:479.8px;top:504.6px" width="15" height="14" viewBox="0 0 15 14"><rect x="0.8" y="6" width="6" height="5" rx="1" fill="#f4f8ff" stroke="#4a74b8" stroke-width="1.2"/><path d="M2 11.6H6V13H1.4Z" fill="#3f6cb0"/><rect x="3.4" y="0.9" width="10.4" height="7.4" rx="1.2" fill="#f8fbff" stroke="#5a86cc" stroke-width="1.3"/><path d="M5.2 2.4L8.8 6.6M8.8 2.4L5.2 6.6" stroke="#e02020" stroke-width="1.7"/><path d="M10 3.4H12M10 5.6H12" stroke="#3465a4" stroke-width="0.9"/></svg>
<svg style="left:509px;top:504.8px" width="14" height="14" viewBox="0 0 14 14"><rect x="0.7" y="4.7" width="11.2" height="8" fill="#f4f8fd" stroke="#8a8a8a" stroke-width="0.9"/><rect x="0.3" y="4.2" width="12" height="2.2" fill="#3a7cc8"/><path d="M6.6 8L8.6 5.4" stroke="#555" stroke-width="1"/><path d="M7 4.6L9.4 1.2C10.4 0.2 12.4 0.6 12.8 2C13.2 3.4 12.6 4.4 11.6 4.8L8.6 6.4Z" fill="#2e9a3c" stroke="#1e7a2c" stroke-width="0.6"/></svg>
<svg style="left:552px;top:510px" width="7" height="4" viewBox="0 0 7 4"><path d="M0 0H7L3.5 4Z" fill="#111"/></svg>
<svg style="left:589.2px;top:510px" width="7" height="4" viewBox="0 0 7 4"><path d="M0 0H7L3.5 4Z" fill="#111"/></svg>
<svg style="left:568px;top:504.8px" width="15" height="14" viewBox="0 0 15 14"><rect x="0.7" y="2.7" width="11.6" height="10" fill="#f2f8fd" stroke="#b09858" stroke-width="1"/><rect x="0.3" y="2.2" width="9" height="2.4" fill="#3a88d0"/><path d="M2 12C7 12 10.6 10 11.6 6.4" stroke="#ecd9a0" stroke-width="1.2" fill="none"/><path d="M11 0.2L12.4 2.6L14.6 3.8L12.4 5L11 7.4L9.6 5L7.4 3.8L9.6 2.6Z" fill="#fff4c8" stroke="#c8a030" stroke-width="0.9"/></svg>
<svg style="left:1058px;top:632px" width="16" height="12" viewBox="0 0 16 12"><rect x="0.5" y="0.5" width="10" height="6" fill="#bfe6c4" stroke="#a89484" stroke-width="0.9"/><rect x="2.3" y="2.3" width="10" height="6" fill="#c8ecd0" stroke="#a89484" stroke-width="0.9"/><rect x="4.2" y="4.2" width="10" height="6.3" fill="#d8eefa" stroke="#8a94a8" stroke-width="0.9"/><rect x="4.8" y="4.8" width="5.4" height="5.2" fill="#3aa63a"/><rect x="5.6" y="6.2" width="3.6" height="1.5" fill="#c8ecc8"/></svg>
<svg style="left:251.3px;top:56.3px" width="8" height="6" viewBox="0 0 8 6"><path d="M0.6 0.7L3.7 4.3L6.8 0.7" fill="none" stroke="#505050" stroke-width="1.6"/></svg>
<svg style="left:904.7px;top:111.3px" width="8" height="6" viewBox="0 0 8 6"><path d="M0.6 0.7L3.7 4.3L6.8 0.7" fill="none" stroke="#505050" stroke-width="1.6"/></svg>

<!-- ================= STATUS ================= -->


<div class="a" style="left:0;top:650px;width:1080px;height:1px;background:#3a3a44"></div>
<div class="a" style="left:33px;top:650px;width:22px;height:1px;background:#8a3a3a"></div>
<svg style="left:814px;top:631.4px" width="3" height="15" viewBox="0 0 3 15"><path d="M1.2 0V14" stroke="#b4b0aa" stroke-width="1.8" stroke-dasharray="1.9 1.95"/></svg>
<span class="t" id="stat" style="left:820px;top:631px;">QE is executing a ...toring function.</span>
<div class="a" style="left:1025px;top:633px;width:27px;height:9px;background:#06b025"></div>


</body></html>
